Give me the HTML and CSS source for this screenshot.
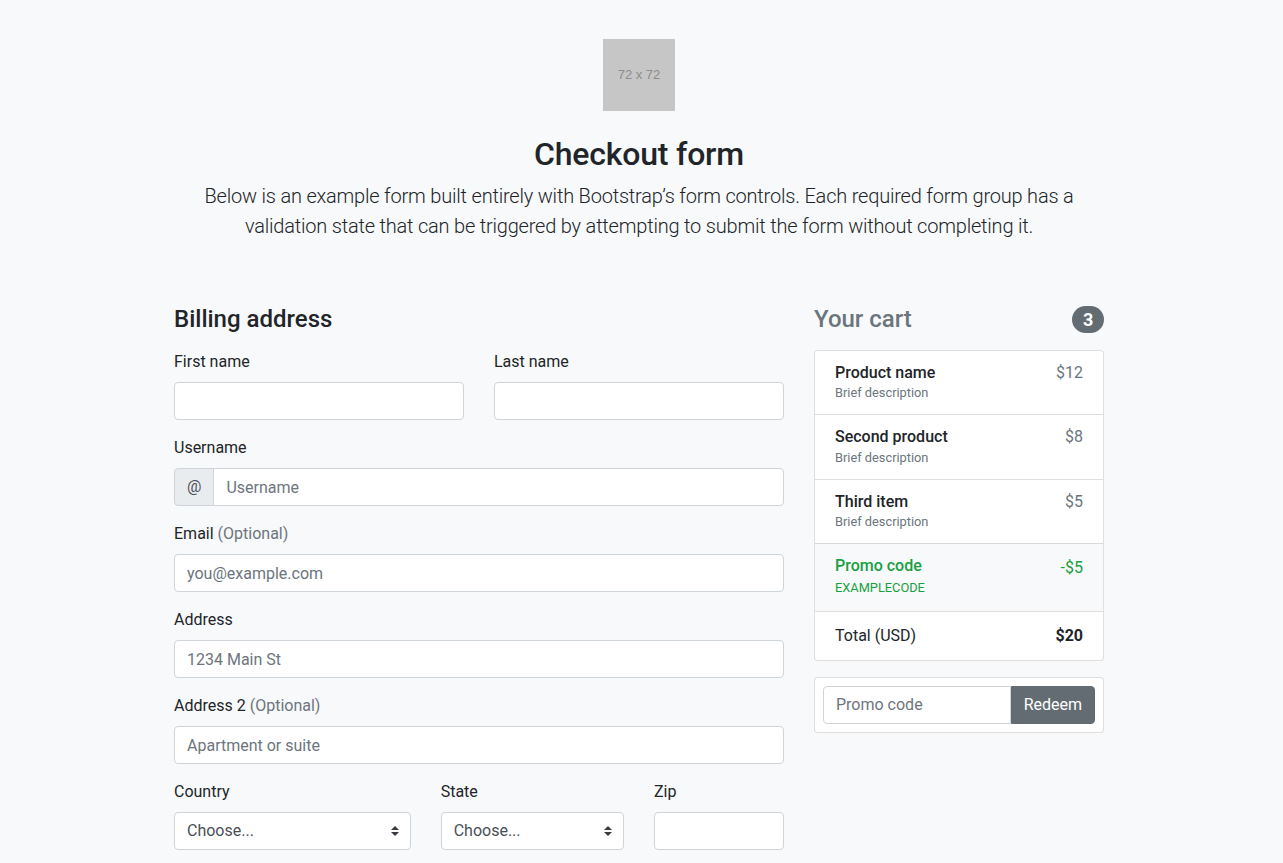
FILE: index.html
```html
<!DOCTYPE html>
<html lang="en">
<head>
<meta charset="utf-8">
<title>Checkout example</title>
<link rel="stylesheet" href="styles.css">
</head>
<body>
<div class="container">
  <div class="header">
    <div class="logo">72 x 72</div>
    <h2 class="title">Checkout form</h2>
    <p class="lead">Below is an example form built entirely with Bootstrap’s form controls. Each required form group has a validation state that can be triggered by attempting to submit the form without completing it.</p>
  </div>

  <div class="main">
    <div class="billing">
      <h4 class="section-title">Billing address</h4>
      <form class="form">
        <div class="row-2">
          <div class="field">
            <label class="label" for="firstName">First name</label>
            <input class="control" type="text" id="firstName">
          </div>
          <div class="field">
            <label class="label" for="lastName">Last name</label>
            <input class="control" type="text" id="lastName">
          </div>
        </div>

        <div class="field">
          <label class="label" for="username">Username</label>
          <div class="input-group">
            <span class="addon">@</span>
            <input class="control control-joined" type="text" id="username" placeholder="Username">
          </div>
        </div>

        <div class="field">
          <label class="label" for="email">Email <span class="muted">(Optional)</span></label>
          <input class="control" type="email" id="email" placeholder="you@example.com">
        </div>

        <div class="field">
          <label class="label" for="address">Address</label>
          <input class="control" type="text" id="address" placeholder="1234 Main St">
        </div>

        <div class="field">
          <label class="label" for="address2">Address 2 <span class="muted">(Optional)</span></label>
          <input class="control" type="text" id="address2" placeholder="Apartment or suite">
        </div>

        <div class="row-3">
          <div class="field">
            <label class="label" for="country">Country</label>
            <div class="select-wrap">
              <select class="control select" id="country">
                <option>Choose...</option>
                <option>United States</option>
              </select>
              <svg class="select-arrow" width="8" height="10" viewBox="0 0 4 5" aria-hidden="true"><path fill="#343a40" d="M2 0L0 2h4zm0 5L0 3h4z"/></svg>
            </div>
          </div>
          <div class="field">
            <label class="label" for="state">State</label>
            <div class="select-wrap">
              <select class="control select" id="state">
                <option>Choose...</option>
                <option>California</option>
              </select>
              <svg class="select-arrow" width="8" height="10" viewBox="0 0 4 5" aria-hidden="true"><path fill="#343a40" d="M2 0L0 2h4zm0 5L0 3h4z"/></svg>
            </div>
          </div>
          <div class="field">
            <label class="label" for="zip">Zip</label>
            <input class="control" type="text" id="zip">
          </div>
        </div>
      </form>
    </div>

    <div class="cart">
      <h4 class="cart-title">
        <span class="muted">Your cart</span>
        <span class="badge">3</span>
      </h4>
      <ul class="list">
        <li class="item condensed">
          <div>
            <h6 class="item-name">Product name</h6>
            <small class="muted">Brief description</small>
          </div>
          <span class="muted">$12</span>
        </li>
        <li class="item condensed">
          <div>
            <h6 class="item-name">Second product</h6>
            <small class="muted">Brief description</small>
          </div>
          <span class="muted">$8</span>
        </li>
        <li class="item condensed">
          <div>
            <h6 class="item-name">Third item</h6>
            <small class="muted">Brief description</small>
          </div>
          <span class="muted">$5</span>
        </li>
        <li class="item promo">
          <div class="success">
            <h6 class="item-name">Promo code</h6>
            <small>EXAMPLECODE</small>
          </div>
          <span class="success">-$5</span>
        </li>
        <li class="item">
          <span>Total (USD)</span>
          <strong>$20</strong>
        </li>
      </ul>

      <form class="promo-card">
        <div class="input-group">
          <input class="control control-left" type="text" placeholder="Promo code">
          <button type="button" class="btn">Redeem</button>
        </div>
      </form>
    </div>
  </div>
</div>
</body>
</html>
```

FILE: styles.css
```css
* { box-sizing: border-box; }

html, body {
  margin: 0;
  background: #f8f9fa;
}

body {
  padding-right: 5px;
  font-family: Roboto, "Noto Sans", "Liberation Sans", sans-serif;
  font-size: 16px;
  line-height: 1.5;
  color: #212529;
}

.container {
  width: 960px;
  margin: 0 auto;
  padding: 0 15px;
}

.header {
  text-align: center;
  padding: 40px 0 48px;
}

.logo {
  width: 72px;
  height: 72px;
  margin: -1px auto 24px;
  background: #c6c6c6;
  color: #8d8d8d;
  font-family: "Liberation Sans", Arial, sans-serif;
  font-size: 13px;
  display: flex;
  align-items: center;
  justify-content: center;
}

.title {
  margin: 0 0 8px;
  font-size: 32px;
  font-weight: 500;
  line-height: 1.2;
  letter-spacing: -0.2px;
}

.lead {
  margin: 0 0 16px;
  font-size: 20px;
  font-weight: 300;
  line-height: 1.5;
  letter-spacing: -0.2px;
}

.main {
  display: flex;
  gap: 30px;
  align-items: flex-start;
}

.billing { flex: 0 0 610px; }
.cart { flex: 0 0 290px; }

.section-title,
.cart-title {
  margin: 0 0 16px;
  font-size: 24px;
  font-weight: 500;
  line-height: 1.2;
  padding-top: 1px;
  margin-top: -1px;
}

.cart-title {
  display: flex;
  justify-content: space-between;
  align-items: center;
}

.muted { color: #6c757d; }
.success { color: #17a03f; }

.form { margin: 0; }

.row-2 {
  display: grid;
  grid-template-columns: 1fr 1fr;
  column-gap: 30px;
}

.row-3 {
  display: grid;
  grid-template-columns: 236.67fr 183.33fr 130fr;
  column-gap: 30px;
}

.field { margin-bottom: 16px; }

.label {
  display: inline-block;
  margin-bottom: 8px;
}

.control {
  display: block;
  width: 100%;
  height: 38px;
  padding: 6px 12px;
  font-family: inherit;
  font-size: 16px;
  font-weight: 400;
  line-height: 1.5;
  color: #495057;
  background: #fff;
  border: 1px solid #ced4da;
  border-radius: 4px;
  outline: none;
}

.control::placeholder { color: #6c757d; opacity: 1; }

.input-group {
  display: flex;
  align-items: stretch;
  width: 100%;
}

.input-group .control { flex: 1 1 auto; width: 1%; }

.addon {
  display: flex;
  align-items: center;
  padding: 6px 12px;
  font-size: 16px;
  line-height: 1.5;
  color: #495057;
  background: #e9ecef;
  border: 1px solid #ced4da;
  border-radius: 4px 0 0 4px;
}

.control-joined {
  margin-left: -1px;
  border-radius: 0 4px 4px 0;
}

.control-left { border-radius: 4px 0 0 4px; }

.select-wrap { position: relative; }

.select {
  appearance: none;
  -webkit-appearance: none;
  padding-right: 28px;
}

.select-arrow {
  position: absolute;
  right: 12px;
  top: 14px;
  pointer-events: none;
}

.badge {
  display: inline-block;
  padding: 4.5px 10.8px;
  font-size: 18px;
  font-weight: 700;
  line-height: 1;
  color: #fff;
  background: #636c72;
  border-radius: 160px;
}

.list {
  list-style: none;
  margin: 0 0 16px;
  padding: 0;
  background: #fff;
  border: 1px solid rgba(0, 0, 0, 0.125);
  border-radius: 4px;
  overflow: hidden;
}

.item {
  display: flex;
  justify-content: space-between;
  padding: 12px 20px;
}

.item + .item { border-top: 1px solid rgba(0, 0, 0, 0.125); }

.condensed { line-height: 1.25; }

.item-name {
  margin: 0;
  font-size: 16px;
  font-weight: 500;
  line-height: 1.2;
}

.item small { font-size: 12.8px; }

.promo { background: #f8f9fa; }

.item strong { font-weight: 700; }

.promo-card {
  margin: 0;
  padding: 8px;
  background: #fff;
  border: 1px solid rgba(0, 0, 0, 0.125);
  border-radius: 4px;
}

.btn {
  padding: 6px 12px;
  font-family: inherit;
  font-size: 16px;
  line-height: 1.5;
  color: #fff;
  background: #636c72;
  border: 1px solid #636c72;
  border-radius: 0 4px 4px 0;
  cursor: pointer;
}
```
